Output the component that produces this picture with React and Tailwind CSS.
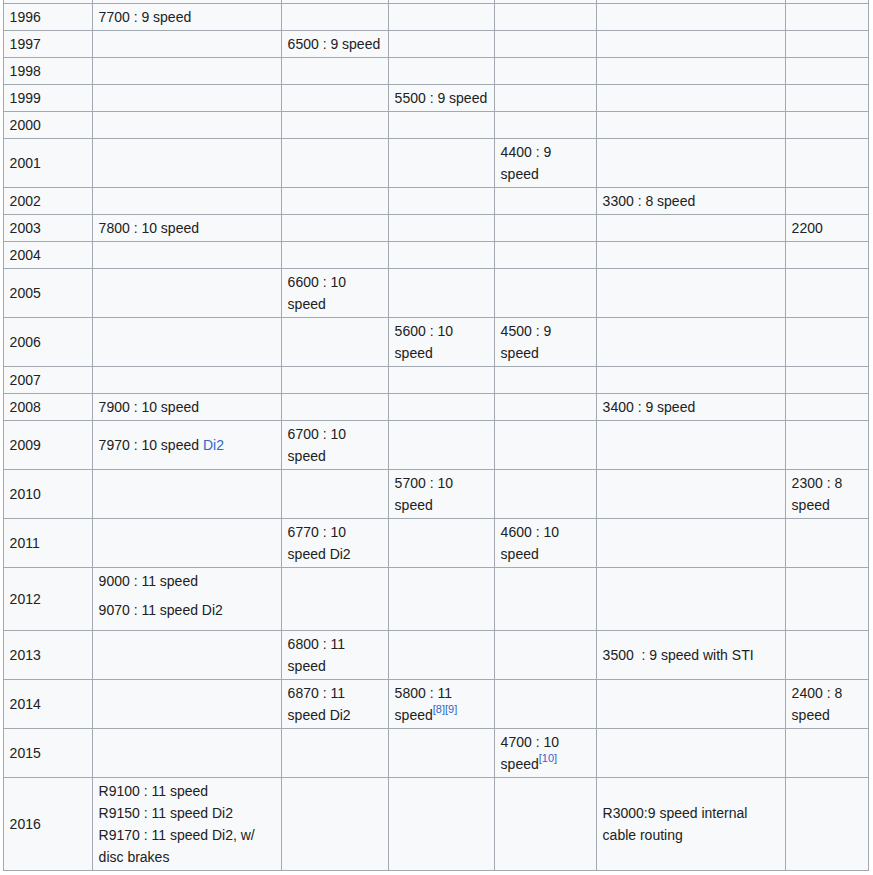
import React from "react";

const link = "text-[#3366cc]";

const Ref = ({ children }) => (
  <sup className={`${link} text-[11px] leading-none align-[2px]`}>{children}</sup>
);

const rows = [
  ["1996", ["7700 : 9 speed", null, null, null, null, null]],
  ["1997", [null, "6500 : 9 speed", null, null, null, null]],
  ["1998", [null, null, null, null, null, null]],
  ["1999", [null, null, "5500 : 9 speed", null, null, null]],
  ["2000", [null, null, null, null, null, null]],
  ["2001", [null, null, null, "4400 : 9 speed", null, null]],
  ["2002", [null, null, null, null, "3300 : 8 speed", null]],
  ["2003", ["7800 : 10 speed", null, null, null, null, "2200"]],
  ["2004", [null, null, null, null, null, null]],
  ["2005", [null, "6600 : 10 speed", null, null, null, null]],
  ["2006", [null, null, "5600 : 10 speed", "4500 : 9 speed", null, null]],
  ["2007", [null, null, null, null, null, null]],
  ["2008", ["7900 : 10 speed", null, null, null, "3400 : 9 speed", null]],
  [
    "2009",
    [
      <>
        7970 : 10 speed <span className={link}>Di2</span>
      </>,
      "6700 : 10 speed",
      null,
      null,
      null,
      null,
    ],
  ],
  ["2010", [null, null, "5700 : 10 speed", null, null, "2300 : 8 speed"]],
  ["2011", [null, "6770 : 10 speed Di2", null, "4600 : 10 speed", null, null]],
  [
    "2012",
    [
      <>
        <div>9000 : 11 speed</div>
        <p className="mt-[7px] mb-[7px]">9070 : 11 speed Di2</p>
      </>,
      null,
      null,
      null,
      null,
      null,
    ],
  ],
  ["2013", [null, "6800 : 11 speed", null, null, "3500\u00a0 : 9 speed with STI", null]],
  [
    "2014",
    [
      null,
      "6870 : 11 speed Di2",
      <>
        5800 : 11 speed<Ref>[8][9]</Ref>
      </>,
      null,
      null,
      "2400 : 8 speed",
    ],
  ],
  [
    "2015",
    [
      null,
      null,
      null,
      <>
        4700 : 10 speed<Ref>[10]</Ref>
      </>,
      null,
      null,
    ],
  ],
  [
    "2016",
    [
      <>
        R9100 : 11 speed
        <br />
        R9150 : 11 speed Di2
        <br />
        R9170 : 11 speed Di2, w/ disc brakes
      </>,
      null,
      null,
      null,
      "R3000:9 speed internal cable routing",
      null,
    ],
  ],
];

const cell = "border border-[#a2a9b1] px-[5.6px] py-[2px] align-middle";

export default function App() {
  return (
    <div className="bg-white min-h-[875px] overflow-hidden pl-[3px] font-['Liberation_Sans',Arial,sans-serif] text-[14px] leading-[22px] text-[#202122]">
      <table className="table-fixed border-collapse bg-[#f8f9fa] w-[866px] -mt-[24px]">
        <colgroup>
          <col className="w-[89px]" />
          <col className="w-[189px]" />
          <col className="w-[107px]" />
          <col className="w-[106px]" />
          <col className="w-[102px]" />
          <col className="w-[189px]" />
          <col className="w-[83px]" />
        </colgroup>
        <tbody>
          <tr>
            {Array.from({ length: 7 }).map((_, i) => (
              <td key={i} className={cell}>
                &nbsp;
              </td>
            ))}
          </tr>
          {rows.map(([year, cells]) => (
            <tr key={year}>
              <td className={cell}>{year}</td>
              {cells.map((c, i) => (
                <td key={i} className={cell}>
                  {c}
                </td>
              ))}
            </tr>
          ))}
        </tbody>
      </table>
    </div>
  );
}
